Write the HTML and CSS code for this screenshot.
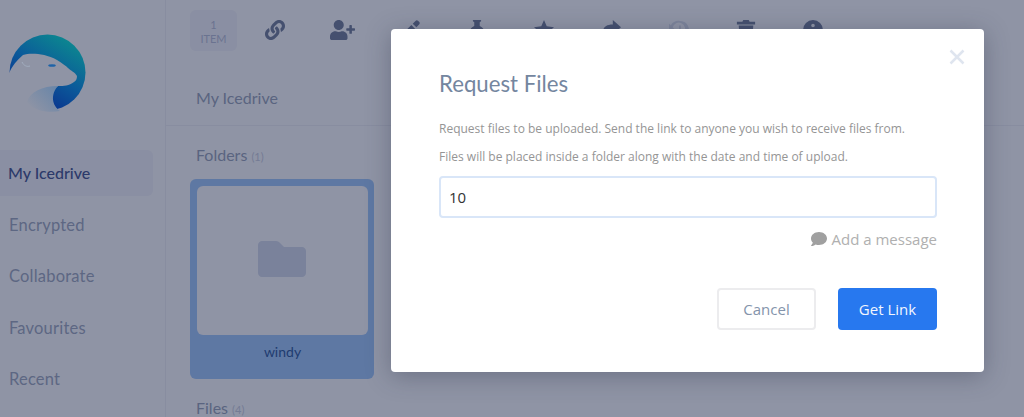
FILE: index.html
```html
<!DOCTYPE html>
<html lang="en">

<head>
    <meta charset="utf-8">
    <meta name="viewport" content="width=device-width, initial-scale=1.0">
    <title>Request Files</title>
    <link rel="stylesheet" href="styles.css">
</head>

<body>
    <div class="app">
        <aside class="sidebar">
            <svg class="logo" viewBox="0 0 100 100" aria-hidden="true">
                <defs>
                    <linearGradient id="ring" gradientUnits="userSpaceOnUse" x1="70" y1="20" x2="30" y2="85">
                        <stop offset="0" stop-color="#0c8790" />
                        <stop offset="0.5" stop-color="#0b5a9a" />
                        <stop offset="0.85" stop-color="#0b3a90" />
                    </linearGradient>
                    <linearGradient id="body" gradientUnits="userSpaceOnUse" x1="56" y1="68" x2="32" y2="90">
                        <stop offset="0" stop-color="#6a86a8" />
                        <stop offset="1" stop-color="#8f94a5" />
                    </linearGradient>
                </defs>
                <circle cx="47.5" cy="52.5" r="38" fill="url(#ring)" />
                <path fill="#8f94a5"
                    d="M9 53C12 46 17 40 23 35C30 33 44 33 57 40C62 43 66 46 68 48C71 51 75 52 77 56C77 59 76 61 74 62C69 66 64 66 58 66C53 69 51 74 52 78C52 83 55 88 60 91L45 97L0 97L0 53Z" />
                <path fill="url(#body)" d="M27 82C30 72 42 66 58 66C52 72 50 84 60 91C50 93 35 92 27 82Z" />
                <ellipse cx="52" cy="45.5" rx="3.8" ry="1.3" fill="#1e63a8" />
                <path d="M22 42C24 46 27 47 30 46" fill="none" stroke="#a3aec0" stroke-width="1" />
            </svg>
            <nav class="menu">
                <a class="menu-item active">My Icedrive</a>
                <a class="menu-item">Encrypted</a>
                <a class="menu-item">Collaborate</a>
                <a class="menu-item">Favourites</a>
                <a class="menu-item">Recent</a>
            </nav>
        </aside>

        <main class="content">
            <div class="toolbar">
                <div class="count">1<br>ITEM</div>
                <svg class="tool tool-link" viewBox="0 0 512 512">
                    <path d="M326.612 185.391c59.747 59.809 58.927 155.698.36 214.59-.11.12-.24.25-.36.37l-67.2 67.2c-59.27 59.27-155.699 59.262-214.96 0-59.27-59.26-59.27-155.7 0-214.96l37.106-37.106c9.84-9.84 26.786-3.3 27.294 10.606.648 17.722 3.826 35.527 9.69 52.721 1.986 5.822.567 12.262-3.783 16.612l-13.087 13.087c-28.026 28.026-28.905 73.66-1.155 101.96 28.024 28.579 74.086 28.749 102.325.51l67.2-67.19c28.191-28.191 28.073-73.757 0-101.83-3.701-3.694-7.429-6.564-10.341-8.569a16.037 16.037 0 0 1-6.947-12.606c-.396-10.567 3.348-21.456 11.698-29.806l21.054-21.055c5.521-5.521 14.182-6.199 20.584-1.731a152.482 152.482 0 0 1 20.522 17.197zM467.547 44.449c-59.261-59.262-155.69-59.27-214.96 0l-67.2 67.2c-.12.12-.25.25-.36.37-58.566 58.892-59.387 154.781.36 214.59a152.454 152.454 0 0 0 20.521 17.196c6.402 4.468 15.064 3.789 20.584-1.731l21.054-21.055c8.35-8.35 12.094-19.239 11.698-29.806a16.037 16.037 0 0 0-6.947-12.606c-2.912-2.005-6.64-4.875-10.341-8.569-28.073-28.073-28.191-73.639 0-101.83l67.2-67.19c28.239-28.239 74.3-28.069 102.325.51 27.75 28.3 26.872 73.934-1.155 101.96l-13.087 13.087c-4.35 4.35-5.769 10.79-3.783 16.612 5.864 17.194 9.042 34.999 9.69 52.721.509 13.906 17.454 20.446 27.294 10.606l37.106-37.106c59.271-59.259 59.271-155.699.001-214.959z" />
                </svg>
                <svg class="tool tool-user" viewBox="0 0 640 512">
                    <path d="M624 208h-64v-64c0-8.8-7.2-16-16-16h-32c-8.8 0-16 7.2-16 16v64h-64c-8.8 0-16 7.2-16 16v32c0 8.8 7.2 16 16 16h64v64c0 8.8 7.2 16 16 16h32c8.8 0 16-7.2 16-16v-64h64c8.8 0 16-7.2 16-16v-32c0-8.8-7.2-16-16-16zm-400 48c70.7 0 128-57.3 128-128S294.7 0 224 0 96 57.3 96 128s57.3 128 128 128zm89.6 32h-16.7c-22.2 10.2-46.9 16-72.9 16s-50.6-5.8-72.9-16h-16.7C60.2 288 0 348.2 0 422.4V464c0 26.5 21.5 48 48 48h352c26.5 0 48-21.5 48-48v-41.6c0-74.2-60.2-134.4-134.4-134.4z" />
                </svg>
                <svg class="tool" viewBox="0 0 22 22"><path d="M14 4l3-3c1-1 2-1 3 0l1 1c1 1 1 2 0 3l-3 3zM12.500 5.500l4 4L6 20l-5 1 1-5z" /></svg>
                <svg class="tool" viewBox="0 0 22 22"><path d="M6.500 0h9v1.500l-1.500 1v4c2 1 3.500 2 4 3.500v2H12.200l-1.200 9-1.200-9H4v-2c.5-1.500 2-2.500 4-3.500v-4l-1.500-1z" /></svg>
                <svg class="tool" viewBox="0 0 22 22"><path d="M11 0l3 7 8 1-6 5 2 8-7-4-7 4 2-8-6-5 8-1z" /></svg>
                <svg class="tool" viewBox="0 0 22 22"><path d="M13 0l9 8-9 8v-5C7 11 4 13 5 19 1 15 0 5 13 5z" /></svg>
                <svg class="tool tool-faded" viewBox="0 0 22 22"><path d="M12 1a10 10 0 1 1-8 16l2-2a7 7 0 1 0-2-7l3 3H0V4l2 2a10 10 0 0 1 10-5zm-1 5h2v5l3 2-1 2-4-3z" /></svg>
                <svg class="tool" viewBox="0 0 22 22"><path d="M8 0h6l1 2h6v3H1V2h6zM3 6h16l-1 15c0 1-1 1-1 1H5s-1 0-1-1z" /></svg>
                <svg class="tool" viewBox="0 0 22 22"><path d="M11 0a11 11 0 1 1 0 22 11 11 0 0 1 0-22zm0 4a2 2 0 1 0 0 4 2 2 0 0 0 0-4zM9 10v2h1v4H9v2h4v-8z" fill-rule="evenodd" /></svg>
            </div>

            <h2 class="crumb">My Icedrive</h2>

            <section class="listing">
                <h3 class="section-title">Folders <small>(1)</small></h3>
                <div class="folder-card">
                    <div class="folder-thumb">
                        <svg class="folder-icon" viewBox="0 0 48 36">
                            <path d="M4 0h14c2 0 3 1 4 2l4 4h18c2 0 4 2 4 4v22c0 2-2 4-4 4H4c-2 0-4-2-4-4V4c0-2 2-4 4-4z" />
                        </svg>
                    </div>
                    <div class="folder-name">windy</div>
                </div>
                <h3 class="section-title files-title">Files <small>(4)</small></h3>
            </section>
        </main>
    </div>

    <div class="modal">
        <button class="close" aria-label="Close">
            <svg viewBox="0 0 16 16"><path d="M1.500 1.500l13 13M14.500 1.500l-13 13" /></svg>
        </button>
        <h1 class="modal-title">Request Files</h1>
        <p class="modal-text">Request files to be uploaded. Send the link to anyone you wish to receive files from.</p>
        <p class="modal-text">Files will be placed inside a folder along with the date and time of upload.</p>
        <input class="modal-input" type="text" value="10">
        <div class="add-message">
            <svg viewBox="0 0 512 512"><path d="M256 32C114.600 32 0 125.100 0 240c0 49.600 21.400 95 57 130.700C44.500 421.100 2.700 466 2.200 466.500c-2.200 2.300-2.800 5.700-1.500 8.700S4.800 480 8 480c66.300 0 116-31.800 140.600-51.400 32.700 12.300 69 19.400 107.400 19.400 141.400 0 256-93.100 256-208S397.400 32 256 32z" /></svg>
            Add a message
        </div>
        <div class="modal-actions">
            <button class="btn btn-cancel">Cancel</button>
            <button class="btn btn-primary">Get Link</button>
        </div>
    </div>
</body>

</html>
```

FILE: styles.css
```css
html,
body {
    height: 100%;
}

body {
    margin: 0;
    overflow: hidden;
    font-family: "Lato", sans-serif;
    background-color: #8f94a5;
}

.app {
    display: flex;
    height: 417px;
    overflow: hidden;
}

.sidebar {
    flex: none;
    width: 165px;
    border-right: 1px solid #888da0;
}

.logo {
    display: block;
    width: 100px;
    height: 100px;
    margin-top: 20px;
}

.menu {
    margin-top: 30px;
    width: 153px;
}

.menu-item {
    display: block;
    height: 46px;
    line-height: 46px;
    margin-bottom: 5.500px;
    padding-left: 9px;
    font-size: 16.500px;
    letter-spacing: 0.2px;
    color: #5d6783;
}

.menu-item.active {
    padding-left: 8px;
    background-color: #8a8fa3;
    border-radius: 0 6px 6px 0;
    font-size: 16px;
    font-weight: 500;
    letter-spacing: 0;
    color: #2c3a6a;
}

.content {
    flex: 1;
}

.toolbar {
    display: flex;
    align-items: center;
    height: 41px;
    margin-top: 10px;
    padding-left: 24px;
}

.count {
    width: 47px;
    height: 41px;
    box-sizing: border-box;
    padding-top: 8px;
    background-color: #8a8fa3;
    border-radius: 6px;
    font-size: 11px;
    line-height: 14px;
    text-align: center;
    color: #6a7390;
}

.tool {
    flex: none;
    width: 22px;
    height: 20px;
    margin: -1px 22.650px 0;
    fill: #45506f;
}

.tool-link {
    margin-left: 27px;
}

.tool-user {
    width: 27px;
    margin-left: 20.150px;
    margin-right: 20.150px;
}

.tool-faded {
    fill: #7d849b;
}

.crumb {
    margin: 0;
    height: 75px;
    box-sizing: border-box;
    padding: 36px 0 0 30px;
    border-bottom: 1px solid #888da0;
    font-size: 16px;
    line-height: 22px;
    font-weight: 400;
    color: #5a6480;
}

.listing {
    padding: 0 0 0 24px;
}

.section-title {
    margin: 0;
    padding: 18px 0 0 6px;
    height: 35px;
    box-sizing: border-box;
    font-size: 16px;
    line-height: 22px;
    font-weight: 400;
    color: #5a6480;
}

.section-title small {
    font-size: 11px;
    color: #747b94;
}

.folder-card {
    width: 184px;
    height: 200px;
    margin-top: 18px;
    box-sizing: border-box;
    padding: 7px 6px 0 7px;
    background-color: #5e78a3;
    border-radius: 6px;
}

.folder-thumb {
    display: flex;
    align-items: center;
    justify-content: center;
    height: 149px;
    box-sizing: border-box;
    padding: 0 2px 4px 0;
    background-color: #8f94a5;
    border-radius: 6px;
}

.folder-icon {
    width: 48px;
    height: 36px;
    fill: #7a829b;
}

.folder-name {
    margin-top: 7px;
    font-size: 14px;
    line-height: 20px;
    text-align: center;
    color: #1f3c70;
}

.files-title {
    padding-top: 18px;
}

/* dialog sits on top of the page */
.modal {
    position: absolute;
    left: 391px;
    top: 29px;
    width: 593px;
    height: 343px;
    box-sizing: border-box;
    padding: 40px 47px 0 48px;
    background-color: #fff;
    border-radius: 4px;
    box-shadow: 0 4px 24px rgba(40, 45, 70, 0.35);
    font-family: "Open Sans", sans-serif;
}

.close {
    position: absolute;
    top: 20px;
    right: 19px;
    width: 16px;
    height: 16px;
    padding: 0;
    border: none;
    background: none;
}

.close svg {
    display: block;
    width: 16px;
    height: 16px;
    fill: none;
    stroke: #dfe5ef;
    stroke-width: 2.500;
}

.modal-title {
    margin: 0 0 21px;
    font-family: "Lato", sans-serif;
    font-size: 22.200px;
    line-height: 30px;
    font-weight: 400;
    color: #74869f;
}

.modal-text {
    margin: 0 0 10px;
    font-size: 12px;
    line-height: 18px;
    color: #959595;
}

.modal-input {
    display: block;
    width: 100%;
    height: 42px;
    margin-top: 10px;
    box-sizing: border-box;
    padding: 0 8px;
    border: 2px solid #d9e6f8;
    border-radius: 4px;
    outline: none;
    font-family: "Open Sans", sans-serif;
    font-size: 15px;
    color: #333;
}

.add-message {
    display: flex;
    align-items: center;
    justify-content: flex-end;
    gap: 5px;
    margin-top: 11px;
    font-size: 15px;
    line-height: 20px;
    color: #b0b0b0;
}

.add-message svg {
    width: 16px;
    height: 16px;
    fill: #a0a0a0;
}

.modal-actions {
    display: flex;
    justify-content: flex-end;
    gap: 22px;
    margin-top: 39px;
}

.btn {
    width: 99px;
    height: 42px;
    box-sizing: border-box;
    border-radius: 4px;
    font-family: "Open Sans", sans-serif;
    font-size: 15px;
}

.btn-cancel {
    background-color: #fff;
    border: 2px solid #ececee;
    color: #8494ab;
}

.btn-primary {
    background-color: #2778ef;
    border: none;
    color: #f2f6fe;
}
```
